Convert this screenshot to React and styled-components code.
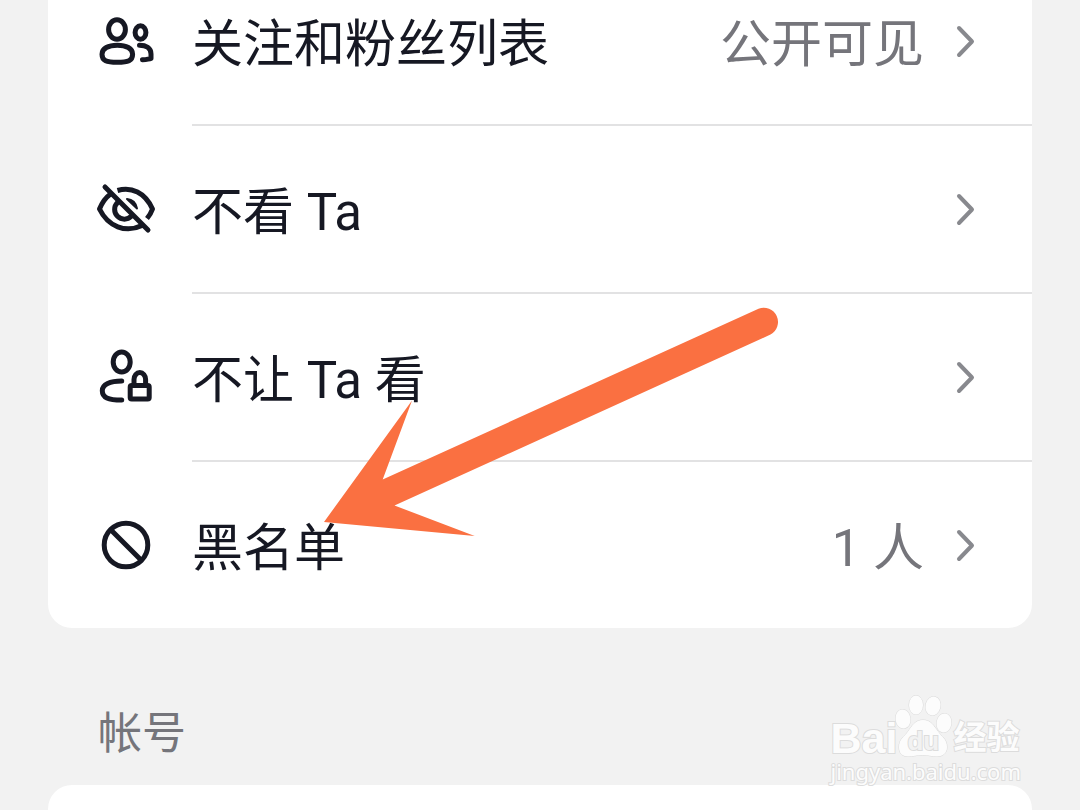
import styled, { createGlobalStyle } from "styled-components";

const UsersIcon = () => (
  <Icon viewBox="0 0 60 60" aria-hidden="true">
    <ellipse cx="21" cy="18.5" rx="8.4" ry="9.8" />
    <path d="M21.3 34.2c-9 0-15.3 3.2-15.3 9 0 6.6 4.5 8 15.3 8s15.3-1.4 15.3-8c0-5.8-6.3-9-15.3-9z" />
    <ellipse cx="44.5" cy="21.5" rx="5.4" ry="6.8" />
    <path d="M43.5 34.3c6.5 0 11.5 2.5 11.5 8.7v4.5c-2 .8-4.500 1-8.500 1.300" />
  </Icon>
);

const EyeOffIcon = () => (
  <Icon viewBox="0 0 60 60" aria-hidden="true">
    <path d="M9 8l43 43" />
    <path d="M21.5 11.5c14-4 27.500 2 35 18.500-1.200 3.500-3 6.500-5.500 9.500" strokeLinecap="butt" />
    <path d="M14 15.500C9 19 6 24 3.500 30 12 47.500 29.500 54.500 46 46.500" />
    <path d="M21.500 23.500a9.600 9.600 0 0 0 13.800 13.800" />
    <path d="M31 20c5.500.5 9 4 10 9.500z" fill="currentColor" strokeWidth="2" />
  </Icon>
);

const UserLockIcon = () => (
  <Icon viewBox="0 0 60 60" aria-hidden="true">
    <ellipse cx="25.7" cy="15" rx="8.5" ry="10" />
    <path d="M25.7 34C14 34 6.3 37.5 6.3 43.7 6.3 50.5 12 53 25.7 53" />
    <rect x="34.2" y="38.6" width="19" height="13.5" rx="1.5" />
    <path d="M38 38v-5.5a5.8 7 0 0 1 11.600 0V38" />
  </Icon>
);

const BanIcon = () => (
  <Icon viewBox="0 0 60 60" aria-hidden="true">
    <circle cx="30" cy="30" r="21.8" />
    <path d="M15 15l30 30" />
  </Icon>
);

const Chevron = () => (
  <ChevronSvg viewBox="0 0 20 36" aria-hidden="true">
    <path d="M3 5l13 13.5L3 32" />
  </ChevronSvg>
);

const rows = [
  { label: "关注和粉丝列表", value: "公开可见", icon: UsersIcon },
  { label: "不看 Ta", icon: EyeOffIcon },
  { label: "不让 Ta 看", icon: UserLockIcon },
  { label: "黑名单", value: "1 人", icon: BanIcon },
];

const App = () => {
  return (
    <Page>
      <GlobalStyle />
      <List>
        {rows.map(({ label, value, icon: RowIcon }) => (
          <Item key={label}>
            <Row type="button">
              <RowIcon />
              <Label>{label}</Label>
              {value && <Value>{value}</Value>}
              <Chevron />
            </Row>
          </Item>
        ))}
      </List>
      <SectionTitle>帐号</SectionTitle>
      <NextCard />

      <Arrow viewBox="0 0 456 230" aria-hidden="true">
        <path d="M0 215L88 93.5 58.7 172.5 434.5 1.7A14.3 14.3 0 0 1 446.5 27.6L70.5 198.5 150.7 229z" />
      </Arrow>

      <Watermark>
        <Brand>
          <BrandLatin>Bai</BrandLatin>
          <PawWrap>
            <Paw viewBox="0 0 60 64" aria-hidden="true">
              <ellipse cx="10" cy="25" rx="7.5" ry="9.5" transform="rotate(-8 10 25)" />
              <ellipse cx="23" cy="11" rx="7" ry="9.5" />
              <ellipse cx="40" cy="12" rx="7.5" ry="9.5" transform="rotate(12 40 12)" />
              <ellipse cx="51" cy="29" rx="7.5" ry="9.5" transform="rotate(8 51 29)" />
              <path d="M30 26c8 0 11 6 15 11.500C48 42 54 45 54 53c0 6-4 9.500-10 9.500-5 0-9-1.500-14.500-1.500S20 62.500 15 62.500C9 62.500 6 59 6 53c0-8 6-11 9-15.500C19 32 22 26 30 26z" />
            </Paw>
            <PawText>du</PawText>
          </PawWrap>
          <BrandHan>经验</BrandHan>
        </Brand>
        <Site>jingyan.baidu.com</Site>
      </Watermark>
    </Page>
  );
};

export default App;

const GlobalStyle = createGlobalStyle`
  * {
    box-sizing: border-box;
  }

  body {
    margin: 0;
    background-color: #f2f2f2;
    font-family: Roboto, "Noto Sans CJK SC", sans-serif;
  }
`;

const Page = styled.main`
  position: relative;
  display: flex;
  flex-direction: column;
  height: 100vh;
  padding: 0 48px;
  overflow: hidden;
`;

/* the list is scrolled a little, so its first row is cut at the top */
const List = styled.ul`
  flex-shrink: 0;
  margin: -42px 0 0;
  padding: 0;
  list-style: none;
  background-color: white;
  border-radius: 24px;
`;

const Item = styled.li`
  &:not(:last-child)::after {
    content: "";
    display: block;
    height: 2px;
    margin-left: 144px;
    background-color: #e2e2e3;
  }
`;

const Row = styled.button`
  all: unset;
  box-sizing: border-box;
  display: flex;
  align-items: center;
  width: 100%;
  height: 166px;
  padding: 0 56px 0 48px;
  cursor: pointer;
`;

const Icon = styled.svg`
  flex-shrink: 0;
  width: 60px;
  height: 60px;
  margin-right: 36px;
  color: #161823;
  fill: none;
  stroke: currentColor;
  stroke-width: 5;
  stroke-linecap: round;
  stroke-linejoin: round;
`;

const Label = styled.span`
  flex: 1;
  padding-top: 8px;
  color: #161823;
  font-size: 51px;
  line-height: 60px;
`;

const Value = styled.span`
  padding-top: 8px;
  color: #75757b;
  font-size: 51px;
  line-height: 60px;
`;

const ChevronSvg = styled.svg`
  flex-shrink: 0;
  width: 20px;
  height: 36px;
  margin-left: 32px;
  fill: none;
  stroke: #88898e;
  stroke-width: 4;
  stroke-linecap: round;
  stroke-linejoin: round;
`;

const SectionTitle = styled.h2`
  margin: 0;
  padding: 80px 50px 25px;
  color: #75757b;
  font-size: 44px;
  font-weight: normal;
  line-height: 52px;
`;

const NextCard = styled.section`
  flex: 1;
  background-color: white;
  border-radius: 24px 24px 0 0;
`;

const Arrow = styled.svg`
  position: absolute;
  top: 307px;
  left: 324px;
  width: 456px;
  height: 230px;
  fill: #fa7041;
`;

const Watermark = styled.div`
  position: absolute;
  right: 59px;
  bottom: 26px;
  color: #fcfcfc;
  -webkit-text-stroke: 2px #dcdcdc;
  paint-order: stroke fill;
`;

const Brand = styled.div`
  display: flex;
  align-items: flex-end;
  height: 64px;
`;

const BrandLatin = styled.span`
  font-family: "Liberation Sans", sans-serif;
  font-size: 43px;
  font-weight: bold;
  line-height: 40px;
`;

const PawWrap = styled.div`
  position: relative;
  width: 60px;
  height: 64px;
  margin-left: -4px;
`;

const Paw = styled.svg`
  display: block;
  width: 60px;
  height: 64px;
  fill: #fcfcfc;
  stroke: #dadada;
`;

const PawText = styled.span`
  position: absolute;
  right: 0;
  bottom: 2px;
  left: 0;
  color: #f2f2f2;
  font-family: "Liberation Sans", sans-serif;
  font-size: 26px;
  font-weight: bold;
  line-height: 30px;
  text-align: center;
`;

const BrandHan = styled.span`
  font-size: 33px;
  font-weight: bold;
  line-height: 40px;
`;

const Site = styled.div`
  font-family: "Noto Sans", sans-serif;
  font-size: 22px;
  line-height: 26px;
`;
